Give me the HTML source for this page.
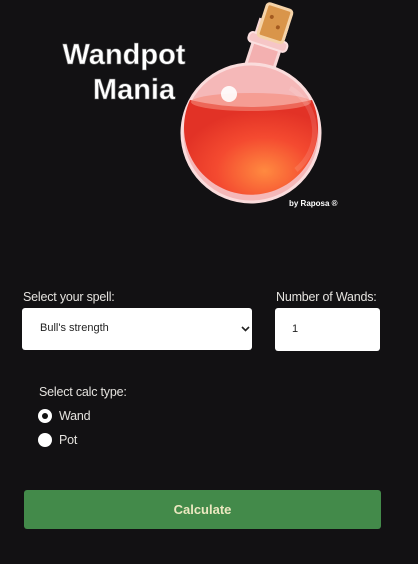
<!DOCTYPE html>
<html><head><style>
body{margin:0;width:418px;height:564px;background:#121113;font-family:"Liberation Sans",sans-serif;position:relative;overflow:hidden;color:#e8e6e3}
.a{position:absolute}
.lbl{font-size:12.5px;color:#e4e2de;letter-spacing:-0.2px}
.box{background:#fff;border-radius:3px;color:#222;font-size:11px}
</style></head><body>
<svg class="a" style="left:0;top:0" width="418" height="220">
<defs>
<radialGradient id="liq" cx="0.6" cy="0.75" r="0.65"><stop offset="0" stop-color="#ff8a40"/><stop offset="0.55" stop-color="#f44a30"/><stop offset="1" stop-color="#e23226"/></radialGradient>
</defs>
<g transform="rotate(18 262 60)">
<rect x="248" y="22" width="28" height="62" fill="#f3b0b0" stroke="#f8d8d8" stroke-width="3"/>
<rect x="242" y="36" width="40" height="10" rx="4" fill="#f6c6c6" stroke="#fbe0e0" stroke-width="2"/>
<rect x="250" y="4" width="26" height="34" rx="3" fill="#d9954a" stroke="#f5d3a8" stroke-width="3"/>
<circle cx="258" cy="16" r="2" fill="#a35a20"/><circle cx="267" cy="24" r="2" fill="#a35a20"/>
</g>
<circle cx="251" cy="133" r="69" fill="#f5b8b8" stroke="#fadcdc" stroke-width="3"/>
<path d="M190 100 Q251 114 312 100 A67 67 0 1 1 190 100Z" fill="url(#liq)"/>
<ellipse cx="251" cy="102" rx="60" ry="9" fill="#f58a7a" opacity="0.6"/>
<path d="M290 88 A50 50 0 0 1 296 170" stroke="#fff" stroke-width="5" fill="none" opacity="0.12"/>
<circle cx="229" cy="94" r="8" fill="#fff" opacity="0.9"/>
<text x="124" y="64" font-family="Liberation Sans" font-weight="bold" font-size="29" fill="#fff" text-anchor="middle" stroke="#666" stroke-width="0.6">Wandpot</text>
<text x="134" y="99" font-family="Liberation Sans" font-weight="bold" font-size="29" fill="#fff" text-anchor="middle" stroke="#666" stroke-width="0.6">Mania</text>
<text x="289" y="206" font-family="Liberation Sans" font-weight="bold" font-size="8" fill="#fff">by Raposa ®</text>
</svg>
<div class="a lbl" style="left:23px;top:290px">Select your spell:</div>
<div class="a box" style="left:22px;top:308px;width:230px;height:42px">
<span class="a" style="left:18px;top:14px">Bull's strength</span>
<svg class="a" style="left:219px;top:18px" width="9" height="6"><path d="M1 1L4.5 4.5L8 1" stroke="#222" stroke-width="1.6" fill="none"/></svg>
</div>
<div class="a lbl" style="left:276px;top:290px">Number of Wands:</div>
<div class="a box" style="left:275px;top:308px;width:105px;height:43px"><span class="a" style="left:17px;top:15px">1</span></div>
<div class="a lbl" style="left:39px;top:385px">Select calc type:</div>
<div class="a" style="left:38px;top:409px;width:14px;height:14px;border-radius:50%;background:#fff"><div class="a" style="left:4px;top:4px;width:6px;height:6px;border-radius:50%;background:#111"></div></div>
<div class="a lbl" style="left:59px;top:409px">Wand</div>
<div class="a" style="left:38px;top:433px;width:14px;height:14px;border-radius:50%;background:#fff"></div>
<div class="a lbl" style="left:59px;top:433px">Pot</div>
<div class="a" style="left:24px;top:490px;width:357px;height:39px;background:#438a4a;border-radius:3px;text-align:center;line-height:39px;font-weight:bold;font-size:13px;color:#ece8c0">Calculate</div>
</body></html>
